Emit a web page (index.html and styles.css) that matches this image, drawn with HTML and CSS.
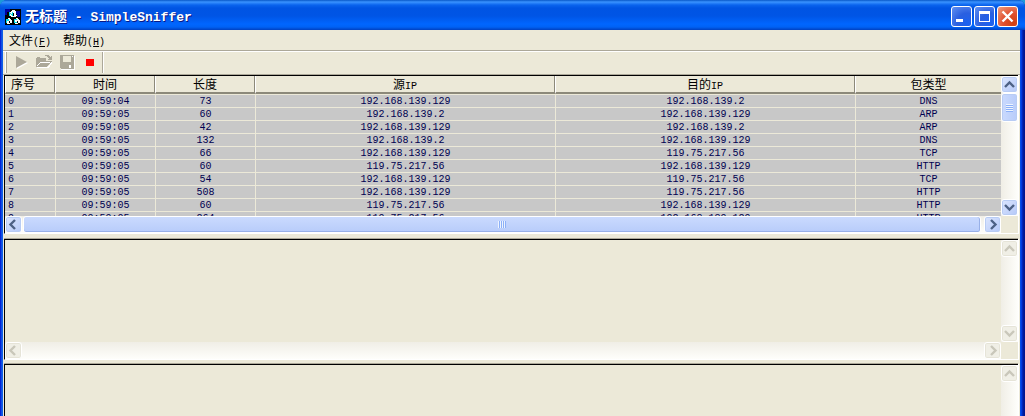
FILE: index.html
```html
<!DOCTYPE html>
<html lang="zh-CN">
<head>
<meta charset="utf-8">
<title>无标题 - SimpleSniffer</title>
<link rel="stylesheet" href="styles.css">
</head>
<body>
<div class="window">
  <header class="titlebar">
    <svg class="app-icon" viewBox="0 0 16 16" shape-rendering="crispEdges" aria-hidden="true">
      <path fill="#000" d="M0 0h16v16H0z"/>
      <path fill="#0000a0" d="M0 0h5v3H2v3H0zM11 2h4v6h-3V5h-1z"/>
      <path fill="#fff" d="M7 1h3v1h1v4h1v1h-1v1H6V7H5V3h1V2h1zM3 9h2v1h1v1h1v3H5v1H2v-1H1v-3h1v-1h1zM11 9h2v1h1v1h1v3h-2v1h-3v-1H9v-3h1v-1h1z"/>
      <path fill="#00d8e8" d="M4 3h1v1h1v1h1V3h1v4H7V6H6V5H5v2H4zM1 10h3v2H2v2H1zM9 10h3v1h-2v2h2v1H9z"/>
      <path fill="#000" d="M8 4h1v3H8zM4 12h1v2H4zM12 12h1v2h-1z"/>
    </svg>
    <h1 class="title">无标题<span class="title-latin"> - SimpleSniffer</span></h1>
    <div class="caption-buttons">
      <button class="caption-button" aria-label="最小化"><svg viewBox="0 0 19 19"><path fill="#fff" d="M4 12h7v3H4z"/></svg></button>
      <button class="caption-button" aria-label="最大化"><svg viewBox="0 0 19 19"><path fill="#fff" fill-rule="evenodd" d="M4 4h11v11H4zM5 7v7h9V7z"/></svg></button>
      <button class="caption-button close" aria-label="关闭"><svg viewBox="0 0 19 19"><path stroke="#fff" stroke-width="2.4" d="M4.500 4.500l10 10M14.500 4.500l-10 10"/></svg></button>
    </div>
  </header>
  <main class="client">
    <nav class="menubar">
      <button class="menu">文件<span class="key">(<u>F</u>)</span></button>
      <button class="menu">帮助<span class="key">(<u>H</u>)</span></button>
    </nav>
    <div class="toolbar-row">
      <div class="toolbar">
        <button class="tool" aria-label="开始" disabled><svg viewBox="0 0 16 16"><path fill="#fff" d="M4 3v12l11-6z"/><path fill="#aca899" d="M3 2v12l11-6z"/></svg></button>
        <button class="tool" aria-label="打开" disabled><svg viewBox="0 0 16 16" shape-rendering="crispEdges"><path fill="#fff" d="M1 14h12l4-7h-1l-4 6H1z"/><path fill="#aca899" d="M0 4h1V3h3v1h6v3h6v1h-1v1h-1v1h-1v1h-1v1h-1v1H0zM9 1h4v1h1v1h1V2h1v4h-4V5h1V4h-1V3h-1V2H9z"/><path fill="#fff" d="M5 8h9v1H4v1H3v1H2v1H1v-1h1v-1h1V9h1V8z"/></svg></button>
        <button class="tool" aria-label="保存" disabled><svg viewBox="0 0 16 16" shape-rendering="crispEdges"><path fill="#fff" d="M2 2h14v14H2z"/><path fill="#aca899" fill-rule="evenodd" d="M1 1h14v14H2l-1-1zM4 2v6h8V2zM10 11v3h2v-3zM13 2v1h1V2z"/><path fill="#ece9d8" d="M4 2h8v6H4z"/></svg></button>
        <button class="tool" aria-label="停止"><svg viewBox="0 0 16 16" shape-rendering="crispEdges"><path fill="#f00" d="M4 5h8v7H4z"/></svg></button>
      </div>
    </div>
    <section class="pane pane-list">
      <div class="list">
        <table class="packets">
          <colgroup><col class="col-no"><col class="col-short"><col class="col-short"><col class="col-ip"><col class="col-ip"><col></colgroup>
          <thead><tr><th>序号</th><th>时间</th><th>长度</th><th>源<span class="key">IP</span></th><th>目的<span class="key">IP</span></th><th>包类型</th></tr></thead>
          <tbody>
            <tr><td>0</td><td>09:59:04</td><td>73</td><td>192.168.139.129</td><td>192.168.139.2</td><td>DNS</td></tr>
            <tr><td>1</td><td>09:59:05</td><td>60</td><td>192.168.139.2</td><td>192.168.139.129</td><td>ARP</td></tr>
            <tr><td>2</td><td>09:59:05</td><td>42</td><td>192.168.139.129</td><td>192.168.139.2</td><td>ARP</td></tr>
            <tr><td>3</td><td>09:59:05</td><td>132</td><td>192.168.139.2</td><td>192.168.139.129</td><td>DNS</td></tr>
            <tr><td>4</td><td>09:59:05</td><td>66</td><td>192.168.139.129</td><td>119.75.217.56</td><td>TCP</td></tr>
            <tr><td>5</td><td>09:59:05</td><td>60</td><td>119.75.217.56</td><td>192.168.139.129</td><td>HTTP</td></tr>
            <tr><td>6</td><td>09:59:05</td><td>54</td><td>192.168.139.129</td><td>119.75.217.56</td><td>TCP</td></tr>
            <tr><td>7</td><td>09:59:05</td><td>508</td><td>192.168.139.129</td><td>119.75.217.56</td><td>HTTP</td></tr>
            <tr><td>8</td><td>09:59:05</td><td>60</td><td>119.75.217.56</td><td>192.168.139.129</td><td>HTTP</td></tr>
            <tr><td>9</td><td>09:59:05</td><td>264</td><td>119.75.217.56</td><td>192.168.139.129</td><td>HTTP</td></tr>
          </tbody>
        </table>
      </div>
      <div class="vscroll">
        <button class="arrow" aria-label="向上滚动"><svg viewBox="0 0 15 15"><path d="M3 10l4.500-4.500L12 10"/></svg></button>
        <div class="thumb thumb-v"><span class="grip grip-v"></span></div>
        <button class="arrow last" aria-label="向下滚动"><svg viewBox="0 0 15 15"><path d="M3 5l4.500 4.500L12 5"/></svg></button>
      </div>
      <div class="hscroll">
        <button class="arrow" aria-label="向左滚动"><svg viewBox="0 0 15 15"><path d="M9 3L4.500 7.500 9 12"/></svg></button>
        <div class="thumb thumb-h"><span class="grip grip-h"></span></div>
        <button class="arrow" aria-label="向右滚动"><svg viewBox="0 0 15 15"><path d="M6 3l4.500 4.500L6 12"/></svg></button>
      </div>
    </section>
    <section class="pane pane-tree">
      <div class="blank"></div>
      <div class="vscroll">
        <button class="arrow" aria-label="向上滚动" disabled><svg viewBox="0 0 15 15"><path d="M3 10l4.500-4.500L12 10"/></svg></button>
        <button class="arrow last" aria-label="向下滚动" disabled><svg viewBox="0 0 15 15"><path d="M3 5l4.500 4.500L12 5"/></svg></button>
      </div>
      <div class="hscroll">
        <button class="arrow" aria-label="向左滚动" disabled><svg viewBox="0 0 15 15"><path d="M9 3L4.500 7.500 9 12"/></svg></button>
        <button class="arrow end" aria-label="向右滚动" disabled><svg viewBox="0 0 15 15"><path d="M6 3l4.500 4.500L6 12"/></svg></button>
      </div>
    </section>
    <section class="pane pane-hex">
      <div class="blank"></div>
      <div class="vscroll">
        <button class="arrow" aria-label="向上滚动" disabled><svg viewBox="0 0 15 15"><path d="M3 10l4.500-4.500L12 10"/></svg></button>
      </div>
    </section>
  </main>
</div>
</body>
</html>
```
FILE: styles.css
```css
* { box-sizing: border-box; }
body {
  margin: 0;
  background: #1c9ad8;
  font: 12px/16px "Liberation Mono", "Noto Sans CJK SC", monospace;
  overflow: hidden;
}
button { margin: 0; padding: 0; border: 0; background: none; font: inherit; color: inherit; }
svg { display: block; }

.window {
  display: flex;
  flex-direction: column;
  height: 100vh;
  background: linear-gradient(to right, #0019cf 0, #0831d9 1px, #166aee 2px, #0855dd 3px, #0855dd calc(100% - 5px), #0046f0 calc(100% - 4px), #0030d0 calc(100% - 3px), #001ea0 calc(100% - 2px), #00138c 100%);
  border-radius: 7px 7px 0 0;
  overflow: hidden;
}
.titlebar {
  display: flex;
  align-items: center;
  height: 30px;
  padding: 3px 7px 0 5px;
  flex: none;
  background: linear-gradient(#0858c8 0, #3a93ff 2px, #0a64ee 5px, #0054e3 8px, #0055e5 16px, #0066ff 24px, #0062f5 27px, #0040c0 30px);
}
.app-icon { width: 16px; height: 16px; }
.title {
  margin: 0 auto 0 4px;
  font: bold 14px/18px "Noto Sans CJK SC", sans-serif;
  color: #fff;
  text-shadow: 1px 1px #0a1883;
  white-space: pre;
}
.title-latin { font: bold 13px/18px "Liberation Mono", monospace; }
.caption-buttons { display: flex; gap: 2px; }
.caption-button {
  width: 21px;
  height: 21px;
  border: 1px solid #fff;
  border-radius: 3px;
  background: radial-gradient(circle at 80% 85%, #1c62f0, #2a5fe0 45%, #5c8cf0 95%);
}
.caption-button svg { width: 19px; height: 19px; }
.close { background: radial-gradient(circle at 80% 85%, #d04010, #e05030 45%, #f09878 95%); }

.client {
  display: flex;
  flex-direction: column;
  flex: 1;
  min-height: 0;
  margin: 0 5px 0 3px;
  background: #ece9d8;
}
.menubar {
  display: flex;
  gap: 12px;
  height: 21px;
  padding: 2px 6px 0;
  border-bottom: 1px solid #aca899;
  flex: none;
}
.menu { height: 16px; font: 12px/16px "Noto Sans CJK SC", sans-serif; color: #000; }
.key { font: 10px/1 "Liberation Mono", monospace; }
.toolbar-row {
  height: 24px;
  padding: 0 2px 1px;
  border-top: 1px solid #fff;
  border-bottom: 1px solid #aca899;
  flex: none;
}
.toolbar {
  display: flex;
  gap: 7px;
  width: max-content;
  height: 21px;
  padding: 2px 4px 0 7px;
  border-left: 1px solid #fff;
  border-right: 1px solid #aca899;
  box-shadow: inset 1px 0 #aca899, 1px 0 #fff;
}
.tool, .tool svg { width: 16px; height: 16px; }

.pane {
  display: grid;
  grid-template-columns: minmax(0, 1fr) 17px;
  grid-template-rows: minmax(0, 1fr) 17px;
  flex: none;
  margin: 0 2px 0 1px;
  border-top: 1px solid #000;
  border-left: 1px solid #000;
}
.pane-list { height: 159px; border-bottom: 1px solid #fff; box-shadow: 1px 0 #fff; }
.pane-tree { height: 121px; margin-top: 5px; border-bottom: 1px solid #fff; box-shadow: 0 -1px #aca899, 1px 0 #fff; }
.pane-hex { flex: 1; grid-template-rows: minmax(0, 1fr); margin-top: 4px; box-shadow: 0 -1px #aca899, 1px 0 #fff; }

.list { overflow: hidden; background: #c8c8c8; }
.packets { width: 100%; table-layout: fixed; border-collapse: separate; border-spacing: 0; }
.col-no { width: 50px; }
.col-short { width: 100px; }
.col-ip { width: 300px; }
.packets th {
  height: 17px;
  padding: 0;
  font: 12px/15px "Noto Sans CJK SC", sans-serif;
  line-height: 15px;
  vertical-align: top;
  background: #ece9d8;
  border-bottom: 2px solid #8c897a;
  border-left: 1px solid #fff;
  border-right: 1px solid #8c897a;
}
.packets th:first-child { text-align: left; padding-left: 5px; }
.packets th:last-child { border-right: 0; }
.packets td {
  height: 13px;
  padding: 1px 0 0;
  font: 10px/11px "Liberation Mono", monospace;
  color: #000050;
  text-align: center;
  border-left: 1px solid #ece9d8;
  border-bottom: 1px solid #ece9d8;
}
.packets td:first-child { text-align: left; padding-left: 3px; border-left: 0; }
.packets tbody tr:first-child td { border-top: 1px solid #ece9d8; height: 14px; }

.vscroll {
  display: flex;
  flex-direction: column;
  background: linear-gradient(to right, #f0eee6, #fefefb);
}
.hscroll { display: flex; background: linear-gradient(#f0eee6, #fefefb); }
.arrow, .thumb {
  flex: none;
  border: 1px solid #fff;
  border-radius: 3px;
  background: linear-gradient(135deg, #dce6fe, #b4c8f8);
  box-shadow: inset 0 0 0 1px #b8ccf4;
}
.arrow { width: 17px; height: 17px; }
.arrow svg { width: 15px; height: 15px; }
.arrow path { fill: none; stroke: #4d6185; stroke-width: 2.4; }
.arrow:disabled { background: #f0efe6; box-shadow: inset 0 0 0 1px #e6e4d8; }
.arrow:disabled path { stroke: #c9c7ba; }
.last { margin-top: auto; }
.end { margin-left: auto; }
.thumb { display: flex; align-items: center; justify-content: center; }
.thumb-v { height: 29px; background: linear-gradient(to right, #cadafe, #b8ccfa); }
.thumb-h { flex: 1; margin: 0 3px 0 1px; background: linear-gradient(#cadafe, #b8ccfa); box-shadow: inset 0 -1px #98b0e8, inset -1px 0 #98b0e8; }
.grip-v { width: 7px; height: 8px; background: repeating-linear-gradient(#eef4fe 0 1px, #8cb0f8 1px 2px); }
.grip-h { width: 8px; height: 7px; background: repeating-linear-gradient(to right, #eef4fe 0 1px, #8cb0f8 1px 2px); }
```
